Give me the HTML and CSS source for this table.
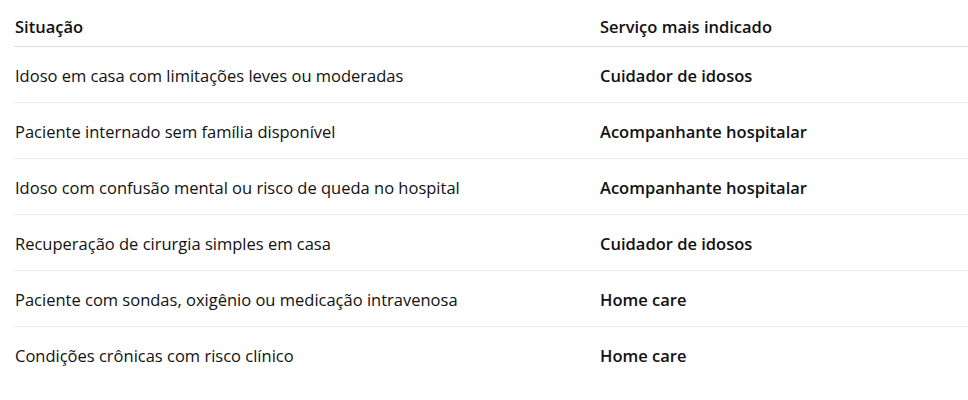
FILE: index.html
```html
<!DOCTYPE html>
<html lang="pt">
<head>
<meta charset="utf-8">
<link rel="stylesheet" href="styles.css">
</head>
<body>
<div class="wrap">
  <table class="tbl">
    <thead>
      <tr><th class="c1">Situação</th><th class="c2">Serviço mais indicado</th></tr>
    </thead>
    <tbody>
      <tr><td>Idoso em casa com limitações leves ou moderadas</td><td class="strong">Cuidador de idosos</td></tr>
      <tr><td>Paciente internado sem família disponível</td><td class="strong">Acompanhante hospitalar</td></tr>
      <tr><td>Idoso com confusão mental ou risco de queda no hospital</td><td class="strong">Acompanhante hospitalar</td></tr>
      <tr><td>Recuperação de cirurgia simples em casa</td><td class="strong">Cuidador de idosos</td></tr>
      <tr><td>Paciente com sondas, oxigênio ou medicação intravenosa</td><td class="strong">Home care</td></tr>
      <tr class="last"><td>Condições crônicas com risco clínico</td><td class="strong">Home care</td></tr>
    </tbody>
  </table>
</div>
</body>
</html>
```

FILE: styles.css
```css
html, body {
  margin: 0;
  padding: 0;
  background: #ffffff;
}
body {
  font-family: "Open Sans", "Noto Sans", sans-serif;
  font-size: 16.5px;
  color: #111111;
  overflow: hidden;
}
.wrap {
  padding-left: 14px;
  width: 1000px;
}
.tbl {
  border-collapse: collapse;
  width: 100%;
  table-layout: fixed;
}
.c1 { width: 585px; }
th {
  text-align: left;
  font-weight: 600;
  height: 46px;
  padding: 8px 1px 0;
  vertical-align: middle;
  box-sizing: border-box;
  border-bottom: 1px solid #dcdcdc;
}
td {
  height: 56px;
  padding: 3px 1px 0;
  vertical-align: middle;
  border-bottom: 1px solid #ededed;
  box-sizing: border-box;
}
tr.last td { border-bottom: none; }
.strong { font-weight: 600; }
```
